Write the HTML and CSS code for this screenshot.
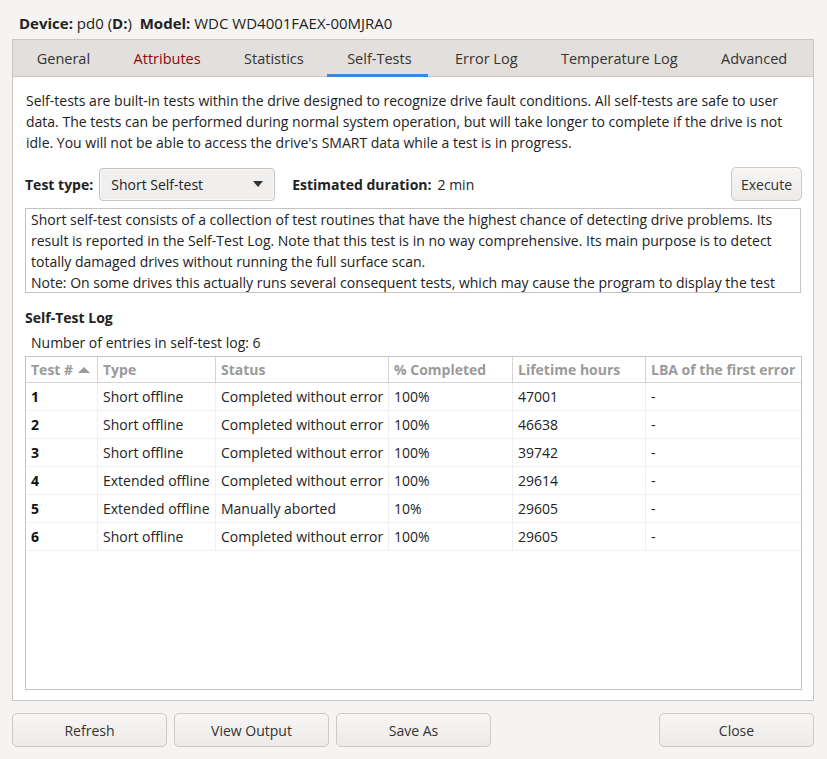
FILE: index.html
```html
<!DOCTYPE html>
<html>
<head>
<meta charset="utf-8">
<link rel="stylesheet" href="styles.css">
</head>
<body>
<div class="window">
  <div class="device"><b>Device:</b> pd0 (<b>D:</b>)&nbsp; <b>Model:</b> WDC WD4001FAEX-00MJRA0</div>
  <div class="notebook">
    <div class="tabs">
      <div class="tab">General</div>
      <div class="tab red">Attributes</div>
      <div class="tab">Statistics</div>
      <div class="tab active">Self-Tests</div>
      <div class="tab">Error Log</div>
      <div class="tab">Temperature Log</div>
      <div class="tab">Advanced</div>
    </div>
    <div class="page">
      <p class="desc">Self-tests are built-in tests within the drive designed to recognize drive fault conditions. All self-tests are safe to user data. The tests can be performed during normal system operation, but will take longer to complete if the drive is not idle. You will not be able to access the drive's SMART data while a test is in progress.</p>
      <div class="testrow">
        <span class="lbl">Test type:</span>
        <div class="combo"><span>Short Self-test</span><svg width="12" height="8" viewBox="0 0 12 8"><path d="M1 1h10L6 7z" fill="#333"/></svg></div>
        <span class="lbl est">Estimated duration:</span><span>2 min</span>
        <div class="spacer"></div>
        <div class="btn exec">Execute</div>
      </div>
      <div class="textbox"><div class="tbinner">Short self-test consists of a collection of test routines that have the highest chance of detecting drive problems. Its result is reported in the Self-Test Log. Note that this test is in no way comprehensive. Its main purpose is to detect totally damaged drives without running the full surface scan.<br>Note: On some drives this actually runs several consequent tests, which may cause the program to display the test progress incorrectly.</div></div>
      <div class="logtitle">Self-Test Log</div>
      <div class="entries">Number of entries in self-test log: 6</div>
      <div class="table">
        <div class="row head">
          <div class="c c1">Test # <svg width="12" height="7" viewBox="0 0 12 7"><path d="M0 7L6 1l6 6z" fill="#9a9a9a"/></svg></div>
          <div class="c c2">Type</div>
          <div class="c c3">Status</div>
          <div class="c c4">% Completed</div>
          <div class="c c5">Lifetime hours</div>
          <div class="c c6">LBA of the first error</div>
        </div>
        <div class="row"><div class="c c1 b">1</div><div class="c c2">Short offline</div><div class="c c3">Completed without error</div><div class="c c4">100%</div><div class="c c5">47001</div><div class="c c6">-</div></div>
        <div class="row"><div class="c c1 b">2</div><div class="c c2">Short offline</div><div class="c c3">Completed without error</div><div class="c c4">100%</div><div class="c c5">46638</div><div class="c c6">-</div></div>
        <div class="row"><div class="c c1 b">3</div><div class="c c2">Short offline</div><div class="c c3">Completed without error</div><div class="c c4">100%</div><div class="c c5">39742</div><div class="c c6">-</div></div>
        <div class="row"><div class="c c1 b">4</div><div class="c c2">Extended offline</div><div class="c c3">Completed without error</div><div class="c c4">100%</div><div class="c c5">29614</div><div class="c c6">-</div></div>
        <div class="row"><div class="c c1 b">5</div><div class="c c2">Extended offline</div><div class="c c3">Manually aborted</div><div class="c c4">10%</div><div class="c c5">29605</div><div class="c c6">-</div></div>
        <div class="row"><div class="c c1 b">6</div><div class="c c2">Short offline</div><div class="c c3">Completed without error</div><div class="c c4">100%</div><div class="c c5">29605</div><div class="c c6">-</div></div>
      </div>
    </div>
  </div>
  <div class="buttons">
    <div class="btn bb">Refresh</div>
    <div class="btn bb">View Output</div>
    <div class="btn bb">Save As</div>
    <div class="spacer"></div>
    <div class="btn bb">Close</div>
  </div>
</div>
</body>
</html>
```
FILE: styles.css
```css
html, body {
  margin: 0;
  padding: 0;
  background: #f5f4f2;
}
body {
  font-family: "Open Sans", "Noto Sans", sans-serif;
  font-size: 14px;
  color: #222;
  width: 827px;
  height: 759px;
  overflow: hidden;
}
.window {
  padding: 12px 13px 0 12px;
  display: flex;
  flex-direction: column;
}
.device {
  font-size: 15px;
  height: 27px;
  padding-left: 7px;
  line-height: 23px;
}
.device b { font-weight: 700; }
.notebook {
  border: 1px solid #c9c5c1;
  height: 660px;
  display: flex;
  flex-direction: column;
  background: #fff;
}
.tabs {
  display: flex;
  height: 36px;
  background: #e3dfdc;
  border-bottom: 1px solid #c9c5c1;
  padding: 0 4px 0 2px;
}
.tab {
  flex: 1 1 auto;
  text-align: center;
  line-height: 37px;
  font-size: 14.5px;
  color: #333;
  position: relative;
}
.tab.red { color: #8b0a0a; }
.tab.active::after {
  content: "";
  position: absolute;
  left: 2px; right: 5px; bottom: -1px;
  height: 3px;
  background: #3a86e0;
}
.page {
  padding: 13px 12px 0 12px;
  flex: 1;
  display: flex;
  flex-direction: column;
}
.desc {
  margin: 0 0 0 1px;
  line-height: 21px;
}
.testrow {
  display: flex;
  align-items: center;
  margin-top: 14px;
  height: 34px;
}
.lbl { font-weight: 700; margin-right: 6px; }
.est { margin-left: 17px; }
.combo {
  width: 176px;
  height: 33px;
  box-sizing: border-box;
  border: 1px solid #c6c2bf;
  border-radius: 4px;
  background: #f0efed;
  display: flex;
  align-items: center;
  justify-content: space-between;
  padding: 0 10px 0 11px;
  box-shadow: inset 0 0 0 1px #f9f8f7;
}
.spacer { flex: 1; }
.btn {
  box-sizing: border-box;
  border: 1px solid #cdc9c5;
  border-radius: 5px;
  background: linear-gradient(#f7f6f5, #ecebe9);
  display: flex;
  align-items: center;
  justify-content: center;
  color: #333;
}
.exec { width: 71px; height: 34px; margin-right: -1px; }
.textbox {
  margin-top: 7px;
  height: 85px;
  box-sizing: border-box;
  border: 1px solid #c6c2bf;
  padding: 0 5px;
  overflow: hidden;
}
.tbinner {
  line-height: 21px;
  height: 83px;
  overflow: hidden;
}
.logtitle {
  font-weight: 700;
  margin-top: 15px;
  line-height: 20px;
}
.entries {
  margin: 5px 0 0 6px;
  line-height: 20px;
}
.table {
  margin-top: 3px;
  border: 1px solid #c6c2bf;
  height: 334px;
  box-sizing: border-box;
  margin-right: -1px;
}
.row {
  display: flex;
  height: 28px;
  border-bottom: 1px solid #f0f0f0;
  box-sizing: border-box;
}
.row.head {
  height: 26px;
  border-bottom: 1px solid #d6d3d0;
  font-weight: 700;
  color: #9a9a9a;
}
.c {
  box-sizing: border-box;
  padding-left: 5px;
  display: flex;
  align-items: center;
  border-right: 1px solid #efefef;
  white-space: nowrap;
  overflow: hidden;
}
.head .c { border-right-color: #d6d3d0; }
.c1 { width: 72px; }
.c1 svg { margin-left: 5px; }
.c2 { width: 118px; }
.c3 { width: 173px; }
.c4 { width: 124px; }
.c5 { width: 133px; }
.c6 { flex: 1; border-right: none; }
.b { font-weight: 700; color: #111; }
.buttons {
  display: flex;
  margin-top: 12px;
  gap: 7px;
}
.bb { width: 155px; height: 34px; }
```
